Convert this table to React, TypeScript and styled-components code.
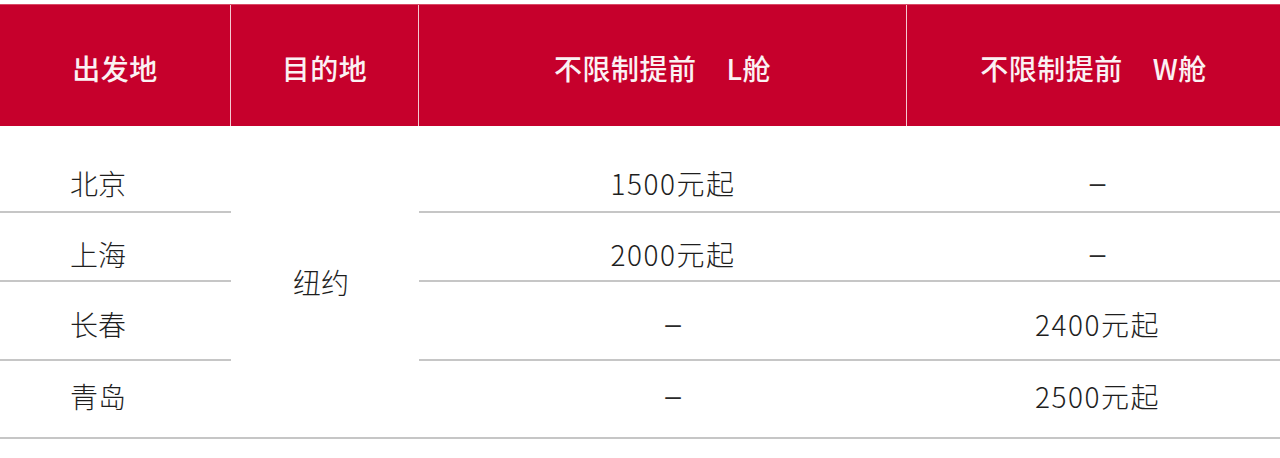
import styled, { createGlobalStyle } from "styled-components";

const GlobalStyle = createGlobalStyle`
  html, body {
    margin: 0;
    padding: 0;
    background: #ffffff;
  }
  body {
    font-family: "Noto Sans CJK SC", "Liberation Sans", "Noto Sans", sans-serif;
  }
`;

const COLS = "231px 188px 488px 373px";

// null = no fare for that cabin, drawn as a dash
const rows: { from: string; l: string | null; w: string | null; pt: number; pb: number }[] = [
  { from: "北京", l: "1500元起", w: null, pt: 28, pb: 0 },
  { from: "上海", l: "2000元起", w: null, pt: 15, pb: 0 },
  { from: "长春", l: null, w: "2400元起", pt: 7, pb: 0 },
  { from: "青岛", l: null, w: "2500元起", pt: 0, pb: 6 },
];

const App = () => {
  return (
    <>
      <GlobalStyle />
      <Page>
        <HeaderRow>
          <HeadCell>出发地</HeadCell>
          <HeadCell>目的地</HeadCell>
          <HeadCell>
            不限制提前<Gap />L舱
          </HeadCell>
          <HeadCell $last>
            不限制提前<Gap />W舱
          </HeadCell>
        </HeaderRow>
        <Body>
          {rows.map((r, i) => (
            <RowGroup key={r.from}>
              <OriginCell
                $row={i + 1}
                $pt={r.pt}
                $pb={r.pb}
                $line={i < rows.length - 1}
              >
                {r.from}
              </OriginCell>
              <PriceCell
                $row={i + 1}
                $col={3}
                $shift={20}
                $pt={r.pt}
                $pb={r.pb}
                $line={i < rows.length - 1}
              >
                {r.l ?? <Dash>–</Dash>}
              </PriceCell>
              <PriceCell
                $row={i + 1}
                $col={4}
                $shift={8}
                $pt={r.pt}
                $pb={r.pb}
                $line={i < rows.length - 1}
              >
                {r.w ?? <Dash>–</Dash>}
              </PriceCell>
            </RowGroup>
          ))}
          <DestCell>纽约</DestCell>
        </Body>
      </Page>
    </>
  );
};

export default App;

const Page = styled.div`
  width: 1280px;
  padding-top: 4px;
`;

const HeaderRow = styled.div`
  display: grid;
  grid-template-columns: ${COLS};
  height: 122px;
  background-color: #c6002c;
  border-top: 1px solid #d84a66;
  box-sizing: border-box;
`;

const HeadCell = styled.div<{ $last?: boolean }>`
  display: flex;
  align-items: center;
  justify-content: center;
  padding-top: 4px;
  color: #fbf1f3;
  font-size: 28px;
  font-weight: 500;
  letter-spacing: 0.5px;
  border-right: ${(p) => (p.$last ? "none" : "1px solid #f4c9d2")};
`;

const Gap = styled.span`
  display: inline-block;
  width: 30px;
`;

const Body = styled.div`
  display: grid;
  grid-template-columns: ${COLS};
  grid-template-rows: 87px 69px 79px 76px;
  border-bottom: 2px solid #c6c6c6;
  color: #1e1e1e;
  font-size: 28px;
  font-weight: 300;
`;

const RowGroup = styled.div`
  display: contents;
`;

type CellProps = {
  $row: number;
  $pt: number;
  $pb: number;
  $line: boolean;
};

const OriginCell = styled.div<CellProps>`
  grid-column: 1;
  grid-row: ${(p) => p.$row};
  display: flex;
  align-items: center;
  padding: ${(p) => `${p.$pt}px 0 ${p.$pb}px 70px`};
  border-bottom: ${(p) => (p.$line ? "2px solid #c6c6c6" : "none")};
`;

const PriceCell = styled.div<CellProps & { $col: number; $shift: number }>`
  grid-column: ${(p) => p.$col};
  grid-row: ${(p) => p.$row};
  display: flex;
  align-items: center;
  justify-content: center;
  letter-spacing: 1.5px;
  padding: ${(p) => `${p.$pt}px 0 ${p.$pb}px ${p.$shift}px`};
  border-bottom: ${(p) => (p.$line ? "2px solid #c6c6c6" : "none")};
`;

const Dash = styled.span`
  font-family: "Liberation Sans", sans-serif;
  font-weight: 400;
  letter-spacing: 0;
  color: #2a2a2a;
`;

const DestCell = styled.div`
  grid-column: 2;
  grid-row: 1 / span 4;
  display: flex;
  align-items: center;
  justify-content: center;
  padding-right: 8px;
`;
